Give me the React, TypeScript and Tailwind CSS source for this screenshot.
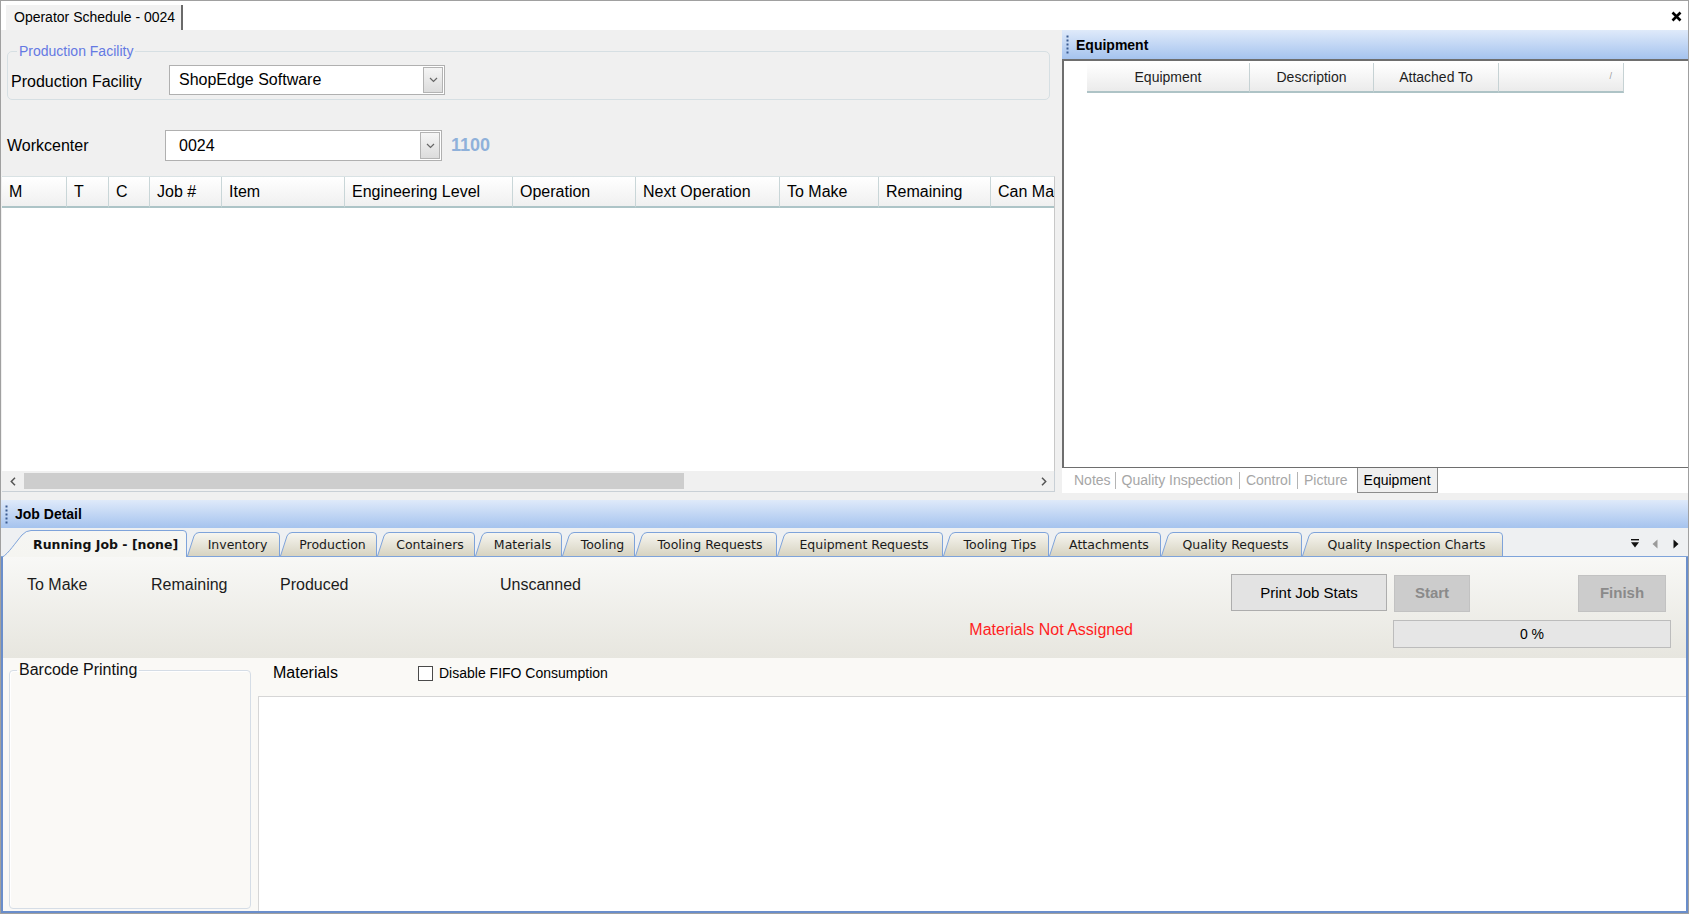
import React from 'react';

const leftCols = [
  { label: 'M', w: 65 },
  { label: 'T', w: 42 },
  { label: 'C', w: 41 },
  { label: 'Job #', w: 72 },
  { label: 'Item', w: 123 },
  { label: 'Engineering Level', w: 168 },
  { label: 'Operation', w: 123 },
  { label: 'Next Operation', w: 144 },
  { label: 'To Make', w: 99 },
  { label: 'Remaining', w: 112 },
  { label: 'Can Make', w: 110 },
];

const eqCols = [
  { label: 'Equipment', w: 163 },
  { label: 'Description', w: 124 },
  { label: 'Attached To', w: 125 },
  { label: '', w: 125 },
];

const jobTabs = [
  { label: 'Running Job - [none]', w: 185, active: true },
  { label: 'Inventory', w: 93 },
  { label: 'Production', w: 97 },
  { label: 'Containers', w: 98 },
  { label: 'Materials', w: 87 },
  { label: 'Tooling', w: 73 },
  { label: 'Tooling Requests', w: 142 },
  { label: 'Equipment Requests', w: 166 },
  { label: 'Tooling Tips', w: 106 },
  { label: 'Attachments', w: 112 },
  { label: 'Quality Requests', w: 141 },
  { label: 'Quality Inspection Charts', w: 201 },
];

function Grip() {
  return (
    <svg width="3" height="19" viewBox="0 0 3 19" className="shrink-0">
      {[0.5, 4.5, 8.5, 12.5, 16.5].map((y) => (
        <rect key={y} x="0.5" y={y} width="2" height="2" fill="#3a5b8f" />
      ))}
    </svg>
  );
}

function PaneHeader({ title, className }: { title: string; className: string }) {
  return (
    <div className={`flex items-center gap-[7px] pl-[4px] bg-linear-to-b from-[#dfeafa] to-[#a5c3ee] ${className}`}>
      <Grip />
      <span className="text-[14px] leading-[16px] font-bold text-black">{title}</span>
    </div>
  );
}

function Dropdown({ value, className, pad }: { value: string; className: string; pad: string }) {
  return (
    <div className={`flex bg-white border border-[#b0b0b0] ${className}`}>
      <span className={`flex-1 self-center text-[16px] leading-[18px] ${pad}`}>{value}</span>
      <span className="w-[20px] my-[1px] mr-[1px] flex items-center justify-center border border-[#b3b3b3] bg-linear-to-b from-[#f5f5f5] to-[#dcdcdc]">
        <svg width="9" height="6" viewBox="0 0 9 6">
          <path d="M1 1 L4.5 4.5 L8 1" fill="none" stroke="#666" strokeWidth="1.2" />
        </svg>
      </span>
    </div>
  );
}

function JobTab({ label, w, active, idx }: { label: string; w: number; active?: boolean; idx: number }) {
  const h = active ? 27 : 24;
  const outline = active
    ? `M0.5,${h} C6,${h - 3} 14,12 20,5 Q24,0.5 29,0.5 L${w - 4},0.5 Q${w - 0.5},0.5 ${w - 0.5},4 L${w - 0.5},${h}`
    : `M0.5,${h} L7,4 Q8.5,0.5 12,0.5 L${w - 4},0.5 Q${w - 0.5},0.5 ${w - 0.5},4 L${w - 0.5},${h}`;
  const gid = `tabfill-${idx}`;
  return (
    <div
      className={`relative shrink-0 flex items-center ${active ? 'h-[27px] -mb-px z-10' : 'h-[24px]'}`}
      style={{ width: w }}
    >
      <svg className="absolute inset-0" width={w} height={h} viewBox={`0 0 ${w} ${h}`}>
        <defs>
          <linearGradient id={gid} x1="0" y1="0" x2="0" y2="1">
            {active ? (
              <>
                <stop offset="0" stopColor="#f6f6f3" />
                <stop offset="1" stopColor="#f5f5f1" />
              </>
            ) : (
              <>
                <stop offset="0" stopColor="#f7f6f1" />
                <stop offset="1" stopColor="#d7d3c1" />
              </>
            )}
          </linearGradient>
        </defs>
        <path d={`${outline} Z`} fill={`url(#${gid})`} />
        <path d={outline} fill="none" stroke="#7ea3da" strokeWidth="1" />
      </svg>
      {active ? (
        <span className="relative pl-[31px] pt-[4px] text-[12.5px] font-bold text-[#111] whitespace-nowrap">{label}</span>
      ) : (
        <span className="relative flex-1 pl-[8px] pt-[3px] text-center text-[12.5px] text-[#1a1a1a] whitespace-nowrap">{label}</span>
      )}
    </div>
  );
}

function Sep() {
  return <span className="self-center h-[17px] border-l border-[#b4b4b4]" />;
}

export default function App() {
  return (
    <div className="w-[1689px] h-[914px] flex flex-col overflow-hidden bg-white border border-[#a0a0a0] font-['Liberation_Sans',Arial,sans-serif] text-black">
      {/* document tab bar */}
      <div className="h-[29px] shrink-0 flex items-end justify-between pl-[5px] pr-[6px] bg-white">
        <div className="h-[25px] flex items-center pl-[8px] pr-[6px] bg-[#f2f2f2] border-r-2 border-[#6a6a6a] text-[14px]">
          Operator Schedule - 0024
        </div>
        <svg width="11" height="11" viewBox="0 0 11 11" className="self-center mt-[2px]">
          <path d="M1.5 1.5 L9.5 9.5 M9.5 1.5 L1.5 9.5" stroke="#000" strokeWidth="2.6" />
        </svg>
      </div>

      {/* upper area */}
      <div className="h-[470px] shrink-0 flex bg-[#f0f0f0]">
        {/* left: schedule */}
        <div className="w-[1054px] shrink-0 flex flex-col">
          <fieldset className="mt-[13px] ml-[6px] mr-[5px] px-[3px] pb-[4px] border border-[#d6dfe3] rounded-[5px]">
            <legend className="ml-[6px] px-[2px] text-[14px] leading-[16px] text-[#6479e3]">Production Facility</legend>
            <div className="flex items-center mt-[6px]">
              <span className="w-[158px] pt-[3px] text-[16px] leading-[18px]">Production Facility</span>
              <Dropdown value="ShopEdge Software" className="w-[276px] h-[30px]" pad="pl-[9px]" />
            </div>
          </fieldset>

          <div className="flex items-center mt-[30px] ml-[6px]">
            <span className="w-[158px] text-[16px] leading-[18px]">Workcenter</span>
            <Dropdown value="0024" className="w-[277px] h-[31px]" pad="pl-[13px]" />
            <span className="ml-[9px] text-[18px] font-bold text-[#8fb1da]">1100</span>
          </div>

          <div className="mt-[15px] ml-[1px] flex flex-col">
            <div className="h-[32px] flex overflow-hidden border-t border-[#d9e2e4] border-r border-r-[#c8c8c8]">
              {leftCols.map((c) => (
                <div
                  key={c.label}
                  className="shrink-0 h-full flex items-center pl-[7px] border-r border-r-[#c9d6d8] border-b-2 border-b-[#adc4c7] bg-linear-to-b from-white to-[#f0f0f0] text-[16px] whitespace-nowrap"
                  style={{ width: c.w }}
                >
                  {c.label}
                </div>
              ))}
            </div>
            <div className="h-[263px] bg-white border-r border-[#c8c8c8]" />
            <div className="h-[21px] flex items-center bg-[#f0f0f0] border-r border-b border-[#c9d0d6]">
              <svg width="6" height="9" viewBox="0 0 6 9" className="ml-[8px]">
                <path d="M5 0.8 L1.3 4.5 L5 8.2" fill="none" stroke="#555" strokeWidth="1.5" />
              </svg>
              <div className="ml-[8px] w-[660px] h-[16px] bg-[#cdcdcd]" />
              <div className="flex-1" />
              <svg width="6" height="9" viewBox="0 0 6 9" className="mr-[7px]">
                <path d="M1 0.8 L4.7 4.5 L1 8.2" fill="none" stroke="#555" strokeWidth="1.5" />
              </svg>
            </div>
          </div>
        </div>

        {/* splitter */}
        <div className="w-[7px] shrink-0" />

        {/* right: equipment */}
        <div className="flex-1 flex flex-col">
          <PaneHeader title="Equipment" className="h-[29px] shrink-0" />
          <div className="h-[409px] shrink-0 flex flex-col bg-white border-l-2 border-t-2 border-b border-[#6e6e6e]">
            <div className="flex mt-[2px] pl-[23px] h-[30px]">
              {eqCols.map((c, i) => (
                <div
                  key={i}
                  className="shrink-0 h-full flex items-center justify-center border-r border-r-[#c6d2d4] border-b-2 border-b-[#aec3c6] bg-linear-to-b from-white to-[#ebebeb] text-[14px] text-[#1e1e1e]"
                  style={{ width: c.w }}
                >
                  {c.label || <span className="ml-auto mr-[11px] text-[9px] text-[#9a9a9a]">/</span>}
                </div>
              ))}
            </div>
          </div>
          <div className="h-[25px] shrink-0 flex items-stretch bg-white pl-[8px] text-[14px] text-[#a6a6a6]">
            <span className="flex items-center px-[4px]">Notes</span>
            <Sep />
            <span className="flex items-center px-[6px]">Quality Inspection</span>
            <Sep />
            <span className="flex items-center px-[6px]">Control</span>
            <Sep />
            <span className="flex items-center px-[6px]">Picture</span>
            <span className="ml-[3px] flex items-center px-[6px] bg-[#efefef] border-l border-r border-b border-[#8c8c8c] text-black">
              Equipment
            </span>
          </div>
        </div>
      </div>

      {/* job detail */}
      <PaneHeader title="Job Detail" className="h-[28px] shrink-0" />

      <div className="h-[29px] shrink-0 flex items-end pl-[1px] bg-[#eef0f2] border-b border-[#7ea3da] font-['DejaVu_Sans',Verdana,sans-serif]">
        {jobTabs.map((t, i) => (
          <JobTab key={t.label} label={t.label} w={t.w} active={t.active} idx={i} />
        ))}
        <div className="ml-auto self-center flex items-center mt-[3px] mr-[9px]">
          <svg width="8" height="9" viewBox="0 0 8 9">
            <rect x="0" y="0" width="8" height="1.4" fill="#111" />
            <path d="M0 3.2 L8 3.2 L4 8.5 Z" fill="#111" />
          </svg>
          <svg width="6" height="10" viewBox="0 0 6 10" className="ml-[13px]">
            <path d="M5.5 0.5 L0.5 5 L5.5 9.5 Z" fill="#9a9a9a" />
          </svg>
          <svg width="6" height="10" viewBox="0 0 6 10" className="ml-[15px]">
            <path d="M0.5 0.5 L5.5 5 L0.5 9.5 Z" fill="#111" />
          </svg>
        </div>
      </div>

      <div className="flex-1 flex flex-col border-l-2 border-r-2 border-b-2 border-[#6a8ecb]">
        {/* running job summary */}
        <div className="h-[101px] shrink-0 flex flex-col pl-[24px] pr-[15px] pt-[17px] bg-linear-to-b from-[#f8f8f6] to-[#e7e6df]">
          <div className="flex items-start h-[37px]">
            <div className="flex mt-[2px] text-[16px] leading-[18px] text-[#1c1c1c]">
              <span className="w-[124px]">To Make</span>
              <span className="w-[129px]">Remaining</span>
              <span className="w-[220px]">Produced</span>
              <span>Unscanned</span>
            </div>
            <button className="ml-auto w-[156px] h-[37px] pt-[1px] bg-[#e3e3e3] border border-[#adadad] text-[15px]">Print Job Stats</button>
            <button className="ml-[7px] mt-[1px] w-[76px] h-[37px] bg-[#cccccc] border border-[#c2c2c2] text-[15px] font-bold text-[#8a8a8a]">Start</button>
            <button className="ml-[108px] mt-[1px] mr-[5px] w-[88px] h-[37px] bg-[#cccccc] border border-[#c2c2c2] text-[15px] font-bold text-[#8a8a8a]">Finish</button>
          </div>
          <div className="flex items-start mt-[9px] h-[28px]">
            <span className="ml-auto mr-[260px] mt-[1px] text-[16px] leading-[18px] text-[#ff1f1f]">Materials Not Assigned</span>
            <div className="w-[278px] h-[28px] flex items-center justify-center bg-[#e6e6e6] border border-[#bcbcbc] text-[14px]">0 %</div>
          </div>
        </div>

        {/* lower area */}
        <div className="flex-1 flex bg-[#faf9f6]">
          <fieldset className="shrink-0 w-[242px] h-[248px] mt-[3px] ml-[6px] border border-[#d5dde6] rounded-[4px] shadow-[inset_1px_1px_0_#ffffff]">
            <legend className="ml-[7px] px-[2px] text-[16px] leading-[18px] text-[#111]">Barcode Printing</legend>
          </fieldset>
          <div className="flex-1 flex flex-col ml-[7px]">
            <div className="h-[38px] shrink-0 flex items-start pt-[6px]">
              <span className="w-[160px] pl-[15px] text-[16px] leading-[18px]">Materials</span>
              <span className="mt-[2px] w-[15px] h-[15px] bg-white border border-[#4a4a4a]" />
              <span className="ml-[6px] text-[14px] leading-[18px]">Disable FIFO Consumption</span>
            </div>
            <div className="flex-1 bg-white border-t border-l border-[#d6d6d6]" />
          </div>
        </div>
      </div>
    </div>
  );
}
